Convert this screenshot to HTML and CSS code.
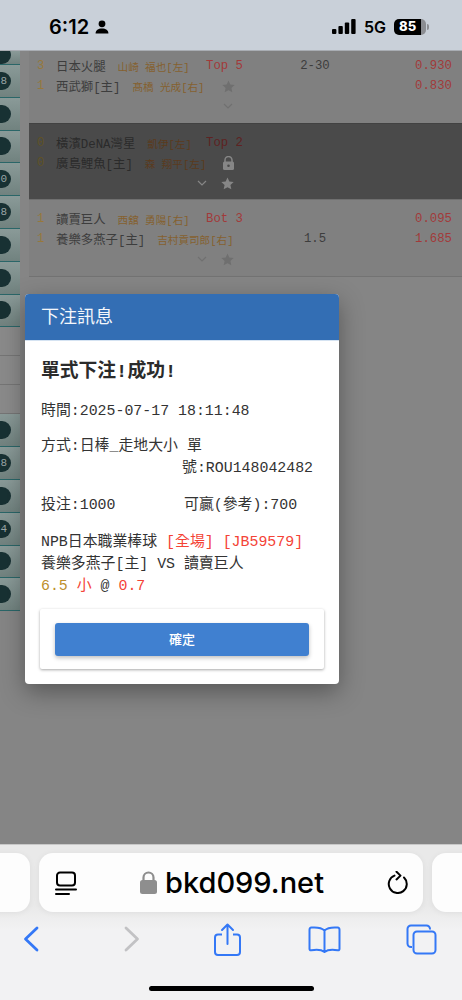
FILE: index.html
```html
<!DOCTYPE html>
<html lang="zh-Hant">

<head>
    <meta charset="UTF-8">
    <meta name="viewport" content="width=device-width, initial-scale=1.0">
    <title>下注訊息</title>
    <link rel="stylesheet" href="styles.css">
</head>

<body>
    <div class="status-bar">
        <div class="status-left">
            <span class="clock">6:12</span>
            <svg class="person" width="14" height="14" viewBox="0 0 14 14">
                <circle cx="7" cy="3.8" r="3.4" fill="#000" />
                <path d="M0.6 13.6c0-3.4 2.6-5 6.4-5s6.4 1.6 6.4 5z" fill="#000" />
            </svg>
        </div>
        <div class="status-right">
            <svg width="24" height="15" viewBox="0 0 24 15">
                <rect x="0" y="10" width="4.4" height="5" rx="1" fill="#000" />
                <rect x="6.4" y="7" width="4.4" height="8" rx="1" fill="#000" />
                <rect x="12.8" y="3.5" width="4.4" height="11.5" rx="1" fill="#000" />
                <rect x="19.2" y="0" width="4.4" height="15" rx="1" fill="#000" />
            </svg>
            <span class="network">5G</span>
            <div class="battery"><span class="battery-level">85</span></div>
            <div class="battery-tip"></div>
        </div>
    </div>

    <div class="page">
        <div class="sidebar">
            <div class="side-item side-first"><span class="pill"></span></div>
            <div class="side-item"><span class="pill">8</span></div>
            <div class="side-item"><span class="pill"></span></div>
            <div class="side-item"><span class="pill"></span></div>
            <div class="side-item"><span class="pill">0</span></div>
            <div class="side-item"><span class="pill">8</span></div>
            <div class="side-item"><span class="pill"></span></div>
            <div class="side-item"><span class="pill"></span></div>
            <div class="side-item"><span class="pill"></span></div>
            <div class="side-plain"></div>
            <div class="side-plain"></div>
            <div class="side-plain"></div>
            <div class="side-item"><span class="pill"></span></div>
            <div class="side-item"><span class="pill">8</span></div>
            <div class="side-item"><span class="pill"></span></div>
            <div class="side-item"><span class="pill">4</span></div>
            <div class="side-item"><span class="pill"></span></div>
            <div class="side-item"><span class="pill"></span></div>
        </div>

        <div class="games">
            <div class="game game-first">
                <span class="score">3</span>
                <div class="team"><span class="team-name">日本火腿</span><span class="pitcher">山崎 福也[左]</span></div>
                <span class="inning">Top 5</span>
                <span class="spread">2-30</span>
                <span class="odds">0.930</span>

                <span class="score">1</span>
                <div class="team"><span class="team-name">西武獅[主]</span><span class="pitcher">髙橋 光成[右]</span></div>
                <svg class="star" width="13" height="13" viewBox="0 0 24 24"><path d="M12 1l3.4 7.4 8 .9-6 5.4 1.7 8L12 18.700l-7.100 4 1.700-8-6-5.400 8-.9z" /></svg>
                <span class="spread"></span>
                <span class="odds">0.830</span>

                <div class="game-actions">
                    <svg class="chevron" width="10" height="6" viewBox="0 0 10 6"><path d="M1 1l4 4 4-4" /></svg>
                </div>
            </div>

            <div class="game game-locked">
                <span class="score">0</span>
                <div class="team"><span class="team-name">橫濱DeNA灣星</span><span class="pitcher">凱伊[左]</span></div>
                <span class="inning">Top 2</span>
                <span class="spread"></span>
                <span class="odds"></span>

                <span class="score">0</span>
                <div class="team"><span class="team-name">廣島鯉魚[主]</span><span class="pitcher">森 翔平[左]</span></div>
                <svg class="lock" width="11" height="14" viewBox="0 0 11 14"><path d="M2 6V4a3.500 3.500 0 0 1 7 0v2" fill="none" stroke="#868686" stroke-width="1.500" /><rect y="5.500" width="11" height="8.500" rx="1.500" fill="#868686" /><circle cx="5.500" cy="9.700" r="1.300" fill="#4a4a4a" /></svg>
                <span class="spread"></span>
                <span class="odds"></span>

                <div class="game-actions game-actions-wide">
                    <svg class="chevron" width="10" height="6" viewBox="0 0 10 6"><path d="M1 1l4 4 4-4" /></svg>
                    <svg class="star" width="13" height="13" viewBox="0 0 24 24"><path d="M12 1l3.4 7.4 8 .9-6 5.400 1.700 8L12 18.700l-7.100 4 1.700-8-6-5.400 8-.9z" /></svg>
                </div>
            </div>

            <div class="game">
                <span class="score">1</span>
                <div class="team"><span class="team-name">讀賣巨人</span><span class="pitcher">西舘 勇陽[右]</span></div>
                <span class="inning">Bot 3</span>
                <span class="spread"></span>
                <span class="odds">0.095</span>

                <span class="score">1</span>
                <div class="team"><span class="team-name">養樂多燕子[主]</span><span class="pitcher">吉村貢司郎[右]</span></div>
                <span class="inning"></span>
                <span class="spread">1.5</span>
                <span class="odds">1.685</span>

                <div class="game-actions game-actions-wide">
                    <svg class="chevron" width="10" height="6" viewBox="0 0 10 6"><path d="M1 1l4 4 4-4" /></svg>
                    <svg class="star" width="13" height="13" viewBox="0 0 24 24"><path d="M12 1l3.4 7.4 8 .9-6 5.400 1.700 8L12 18.700l-7.100 4 1.700-8-6-5.400 8-.9z" /></svg>
                </div>
            </div>
        </div>

        <div class="modal">
            <div class="modal-header">下注訊息</div>
            <div class="modal-body">
                <h2 class="result-title">單式下注!成功!</h2>
                <p class="info-line">時間:2025-07-17 18:11:48</p>
                <div class="info-line info-method">
                    <p>方式:日棒_走地大小 單</p>
                    <p class="ticket-no">號:ROU148042482</p>
                </div>
                <div class="info-line info-split">
                    <span>投注:1000</span>
                    <span>可贏(參考):700</span>
                </div>
                <div class="bet-detail">
                    <p>NPB日本職業棒球 <span class="red">[全場] [JB59579]</span></p>
                    <p>養樂多燕子[主] VS 讀賣巨人</p>
                    <p><span class="gold">6.5</span> <span class="red">小</span> @ <span class="red">0.7</span></p>
                </div>
                <div class="modal-actions">
                    <button class="confirm-btn">確定</button>
                </div>
            </div>
        </div>
    </div>

    <div class="browser-bar">
        <div class="address-row">
            <div class="tab-peek tab-peek-left"></div>
            <div class="address">
                <svg class="reader" width="22" height="24" viewBox="0 0 22 24">
                    <path d="M5 1.500h12a3 3 0 0 1 3 3v7a3 3 0 0 1-3 3H5a3 3 0 0 1-3-3v-7a3 3 0 0 1 3-3z" fill="none" stroke="#000" stroke-width="2" />
                    <path d="M1 18.500h20M1 23h13" stroke="#000" stroke-width="2" stroke-linecap="round" />
                </svg>
                <div class="site">
                    <svg width="17" height="23" viewBox="0 0 17 23">
                        <path d="M3.500 10V6.500a5 5 0 0 1 10 0V10" fill="none" stroke="#8e8e8e" stroke-width="2.200" />
                        <rect y="9" width="17" height="14" rx="2.500" fill="#8e8e8e" />
                    </svg>
                    <span class="site-name">bkd099.net</span>
                </div>
                <svg class="reload" width="21" height="23" viewBox="0 0 21 23">
                    <path d="M7.500 4.600A9 9 0 1 0 17 6.500" fill="none" stroke="#000" stroke-width="2" stroke-linecap="round" />
                    <path d="M9.500 0.800l4 3.800-4 3.800" fill="none" stroke="#000" stroke-width="2" stroke-linecap="round" stroke-linejoin="round" />
                </svg>
            </div>
            <div class="tab-peek tab-peek-right"></div>
        </div>
        <div class="toolbar">
            <svg width="16" height="26" viewBox="0 0 16 26"><path d="M14 2L2.500 13 14 24" fill="none" stroke="#3478f6" stroke-width="2.800" stroke-linecap="round" stroke-linejoin="round" /></svg>
            <svg width="16" height="26" viewBox="0 0 16 26"><path d="M2 2l11.500 11L2 24" fill="none" stroke="#c2c2c4" stroke-width="2.800" stroke-linecap="round" stroke-linejoin="round" /></svg>
            <svg width="27" height="33" viewBox="0 0 27 33">
                <path d="M8 11.500H4a3 3 0 0 0-3 3V29a3 3 0 0 0 3 3h19a3 3 0 0 0 3-3V14.500a3 3 0 0 0-3-3h-4" fill="none" stroke="#3478f6" stroke-width="2" />
                <path d="M13.500 21V1.500M8 7l5.500-5.500L19 7" fill="none" stroke="#3478f6" stroke-width="2" stroke-linecap="round" stroke-linejoin="round" />
            </svg>
            <svg width="33" height="27" viewBox="0 0 33 27">
                <path d="M16.500 4.500C14 2 10 1 3.500 1.500 2.300 1.600 1.500 2.500 1.500 3.700V23c0 1 .8 1.500 1.800 1.300 5-.9 10-.8 13.200 1.700 3.200-2.500 8.200-2.600 13.200-1.700 1 .2 1.800-.3 1.800-1.300V3.700c0-1.200-.8-2.100-2-2.200C23 1 19 2 16.500 4.500zM16.500 4.500V25" fill="none" stroke="#3478f6" stroke-width="2" stroke-linejoin="round" />
            </svg>
            <svg width="31" height="31" viewBox="0 0 31 31">
                <path d="M24 5.500V5a3.500 3.500 0 0 0-3.500-3.500H5A3.500 3.500 0 0 0 1.500 5v14.500A3.500 3.500 0 0 0 5 23h1" fill="none" stroke="#3478f6" stroke-width="2" />
                <rect x="7.500" y="7.500" width="22" height="22" rx="3.500" fill="none" stroke="#3478f6" stroke-width="2" />
            </svg>
        </div>
        <div class="home-indicator"></div>
    </div>
</body>

</html>
```

FILE: styles.css
```css
* {
    padding: 0;
    margin: 0;
    box-sizing: border-box;
}

html,
body {
    width: 462px;
    height: 1000px;
    overflow: hidden;
}

body {
    display: flex;
    flex-direction: column;
    background: #858585;
    font-family: "Liberation Mono", "Noto Sans CJK TC", monospace;
}

/* status bar */
.status-bar {
    height: 51px;
    flex: none;
    display: flex;
    justify-content: space-between;
    align-items: center;
    padding: 3px 33px 0 49px;
    background: #c9d0d9;
    border-bottom: 1px solid #a9adb3;
    font-family: Inter, "Liberation Sans", sans-serif;
    color: #000;
}

.status-left {
    display: flex;
    align-items: center;
    gap: 6px;
}

.clock {
    font-size: 20px;
    font-weight: 600;
}

.status-right {
    display: flex;
    align-items: center;
}

.network {
    font-size: 16px;
    font-weight: 600;
    margin: 0 8px;
}

.battery {
    width: 32px;
    height: 16px;
    border-radius: 5px;
    background: linear-gradient(90deg, #000 85%, #8b8d92 85%);
    display: flex;
    align-items: center;
    padding-left: 5px;
}

.battery-level {
    color: #fff;
    font-size: 13px;
    font-weight: 800;
    line-height: 1;
}

.battery-tip {
    width: 2px;
    height: 6px;
    margin-left: 1px;
    background: #8b8d92;
    border-radius: 0 2px 2px 0;
}

/* page behind the dialog */
.page {
    position: relative;
    height: 793px;
    flex: none;
    display: flex;
    overflow: hidden;
}

.sidebar {
    width: 20px;
    flex: none;
    overflow: hidden;
}

.side-item {
    height: 32.8px;
    display: flex;
    align-items: center;
    background: linear-gradient(180deg, #8a9a98, #71827f);
    border-bottom: 1.5px solid #2a6668;
}

.side-first {
    height: 14px;
    align-items: flex-end;
}

.pill {
    width: 30px;
    height: 18px;
    margin-left: -19px;
    padding-right: 4px;
    flex: none;
    border-radius: 9px;
    background: #183133;
    color: #9aa5a5;
    font-size: 11px;
    line-height: 18px;
    text-align: right;
}

.side-plain {
    height: 29px;
    background: #8a8a8a;
    border-bottom: 1px solid #757575;
}

.games {
    margin-left: 9px;
    flex: 1;
    align-self: flex-start;
    border-bottom: 1px solid #737373;
}

.game {
    display: grid;
    grid-template-columns: 27px 150px 44px 130px 1fr;
    grid-auto-rows: 20px;
    align-items: center;
    padding: 9px 10px 5px 0;
    height: 77px;
    background: #808080;
    border-top: 1px solid #6f6f6f;
    color: #3d3d3d;
    font-size: 12.3px;
}

.game-first {
    height: 72px;
    padding-top: 5px;
    border-top: none;
}

.game-locked {
    height: 76px;
    background: #4a4a4a;
    border-top: 1px solid #424242;
    color: #2b2b2b;
}

.score {
    padding-left: 8px;
    color: #96783c;
}

.game-locked .score {
    color: #5f5226;
}

.team {
    white-space: nowrap;
}

.team-name {
    font-size: 12.4px;
    margin-right: 12px;
}

.pitcher {
    font-size: 10.6px;
    color: #85602f;
}

.game-locked .pitcher {
    color: #5a3a1d;
}

.inning {
    color: #a23a3a;
}

.game-locked .inning {
    color: #5e2222;
}

.spread {
    text-align: center;
}

.odds {
    text-align: right;
    color: #a23a3a;
}

.star {
    fill: #6f6f6f;
    justify-self: center;
    margin-left: 0;
}

.game-locked .star {
    fill: #868686;
}

.lock {
    justify-self: center;
}

.game-actions {
    grid-column: 1 / 4;
    height: 22px;
    display: flex;
    justify-content: flex-end;
    align-items: center;
    padding-right: 17px;
}

.game-actions-wide {
    gap: 14px;
    padding-right: 16px;
}

.chevron {
    fill: none;
    stroke: #707070;
    stroke-width: 1.2;
}

.game-locked .chevron {
    stroke: #868686;
}

/* dialog */
.modal {
    position: absolute;
    top: 243px;
    left: 25px;
    width: 314px;
    height: 390px;
    border-radius: 4px;
    background: #fff;
    overflow: hidden;
    box-shadow: 0 8px 24px rgba(0, 0, 0, 0.35);
}

.modal-header {
    height: 47px;
    padding-left: 16px;
    background: #336eb4;
    border-bottom: 1px solid #d5e3f2;
    color: #f4f7fb;
    font-family: Roboto, "Noto Sans CJK TC", sans-serif;
    font-size: 18px;
    line-height: 46px;
}

.modal-body {
    padding: 18px 15px 0 16px;
    color: #333;
    font-size: 14.9px;
    line-height: 22px;
}

.result-title {
    font-size: 18.8px;
    font-weight: 700;
    line-height: 26px;
    margin-bottom: 15px;
    color: #2b2b2b;
}

.info-line {
    margin-bottom: 13px;
}

.info-method {
    margin-bottom: 15px;
}

.ticket-no {
    padding-left: 141px;
}

.info-split {
    display: grid;
    grid-template-columns: 143px 1fr;
}

.bet-detail {
    margin-top: 15px;
}

.red {
    color: #f44336;
}

.gold {
    color: #bd8f2c;
}

.modal-actions {
    margin: 12px 0 0 -1px;
    height: 60px;
    padding: 14px 15px;
    background: #fff;
    border-radius: 2px;
    box-shadow: 0 1px 3px rgba(0, 0, 0, 0.35);
}

.confirm-btn {
    display: block;
    width: 100%;
    height: 33px;
    padding-bottom: 3px;
    border: none;
    border-radius: 3px;
    background: #4080d0;
    box-shadow: 0 2px 4px rgba(0, 0, 0, 0.25);
    color: #fff;
    font-family: Roboto, "Noto Sans CJK TC", sans-serif;
    font-size: 13px;
    font-weight: 500;
}

/* safari bars */
.browser-bar {
    flex: 1;
    position: relative;
    background: linear-gradient(180deg, #e9e9e9, #e9e9e9 60px, #f2f2f3 85px);
    border-top: 1px solid #c8c8c8;
}

.address-row {
    display: flex;
    gap: 9px;
    padding-top: 8px;
    margin-left: -60px;
}

.tab-peek,
.address {
    height: 59px;
    border-radius: 14px;
    background: #fdfdfd;
    box-shadow: 0 1px 6px rgba(0, 0, 0, 0.06);
    flex: none;
}

.tab-peek {
    width: 90px;
}

.address {
    width: 384px;
    display: flex;
    align-items: center;
    justify-content: space-between;
    padding: 0 15px 0 16px;
}

.site {
    display: flex;
    align-items: center;
    gap: 8px;
}

.site-name {
    font-family: Inter, "Liberation Sans", sans-serif;
    font-size: 29px;
    font-weight: 500;
    color: #000;
}

.toolbar {
    display: grid;
    grid-template-columns: 101px 90px 94px 98px 1fr;
    align-items: center;
    height: 36px;
    margin-top: 9px;
    padding-left: 23px;
}

.home-indicator {
    position: absolute;
    left: 149px;
    bottom: 9px;
    width: 165px;
    height: 5px;
    border-radius: 3px;
    background: #000;
}
```
